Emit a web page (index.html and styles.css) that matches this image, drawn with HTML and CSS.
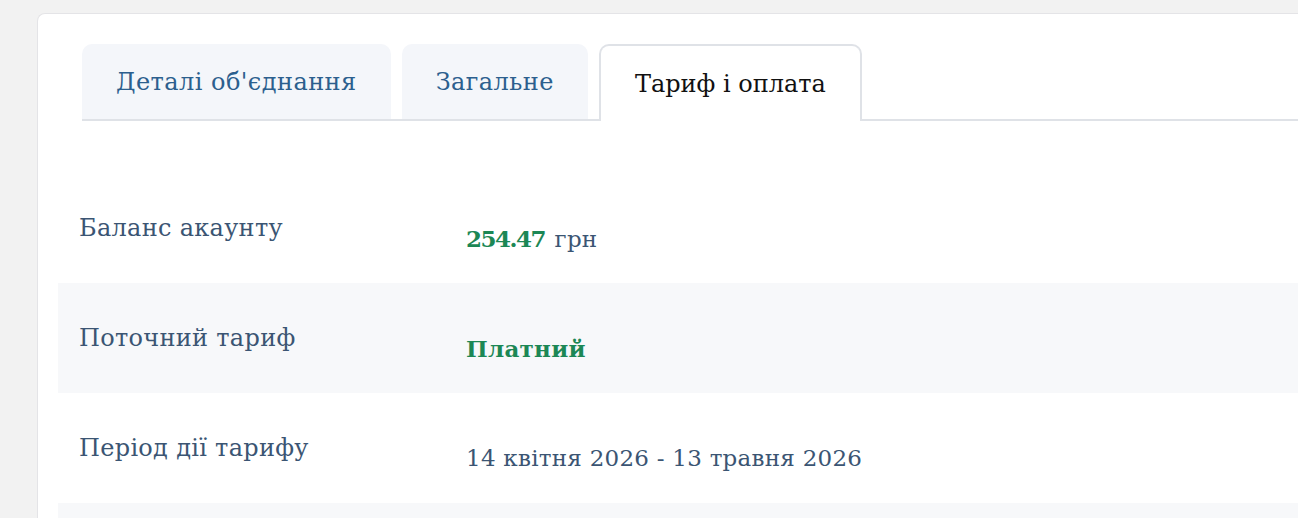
FILE: index.html
```html
<!DOCTYPE html>
<html lang="uk">
<head>
  <meta charset="UTF-8" />
  <meta name="viewport" content="width=device-width, initial-scale=1.0"/>
  <title>Тариф і оплата</title>
  <link rel="stylesheet" href="styles.css">
</head>
<body>
  <div class="card">
    <!-- вкладки -->
    <div class="tabs">
      <div class="tab">Деталі об'єднання</div>
      <div class="tab">Загальне</div>
      <div class="tab active">Тариф і оплата</div>
    </div>

    <div class="rows">
      <div class="row">
        <div class="row-label">Баланс акаунту</div>
        <div class="row-value"><span class="green bold amount">254.47</span> грн</div>
      </div>
      <div class="row">
        <div class="row-label">Поточний тариф</div>
        <div class="row-value green bold">Платний</div>
      </div>
      <div class="row">
        <div class="row-label">Період дії тарифу</div>
        <div class="row-value">14 квітня 2026 - 13 травня 2026</div>
      </div>
      <div class="row">
        <div class="row-label"></div>
        <div class="row-value"></div>
      </div>
    </div>
  </div>
</body>
</html>
```

FILE: styles.css
```css
* {
  box-sizing: border-box;
  margin: 0;
  padding: 0;
}

html, body {
  height: 100%;
  background: #f2f2f2;
  font-family: 'DejaVu Serif', 'Liberation Serif', serif;
  overflow: hidden;
}

body {
  padding: 13px 0 0 37px;
}

.card {
  background: #fff;
  border: 1px solid #e4e4e7;
  border-right: none;
  border-radius: 8px 0 0 0;
  padding: 30px 0 0 20px;
  min-height: 600px;
}

.tabs {
  display: flex;
  gap: 11px;
  margin-left: 24px;
  border-bottom: 2px solid #dfe2e7;
}

.tab {
  height: 75px;
  padding: 0 34px;
  display: flex;
  align-items: center;
  background: #f4f6fa;
  border-radius: 10px 10px 0 0;
  color: #2c5f8e;
  font-size: 24px;
  letter-spacing: 0.45px;
}

.tab.active {
  background: #fff;
  color: #111;
  border: 2px solid #dfe2e7;
  border-bottom: none;
  margin-bottom: -2px;
  height: 77px;
  letter-spacing: 0;
}

.rows {
  margin-top: 52px;
}

.row {
  display: grid;
  grid-template-columns: 387px 1fr;
  height: 110px;
  align-items: center;
  padding-left: 21px;
}

.row:nth-child(even) {
  background: #f7f8fa;
}

.row-label {
  color: #3b5573;
  font-size: 24px;
  letter-spacing: 0.3px;
}

.row-value {
  color: #3b5573;
  font-size: 23px;
  letter-spacing: 0.25px;
  padding-top: 20px;
}

.green {
  color: #1c8755;
}

.bold {
  font-weight: 600;
}

.amount {
  letter-spacing: -1.5px;
  margin-right: 2px;
}
```
